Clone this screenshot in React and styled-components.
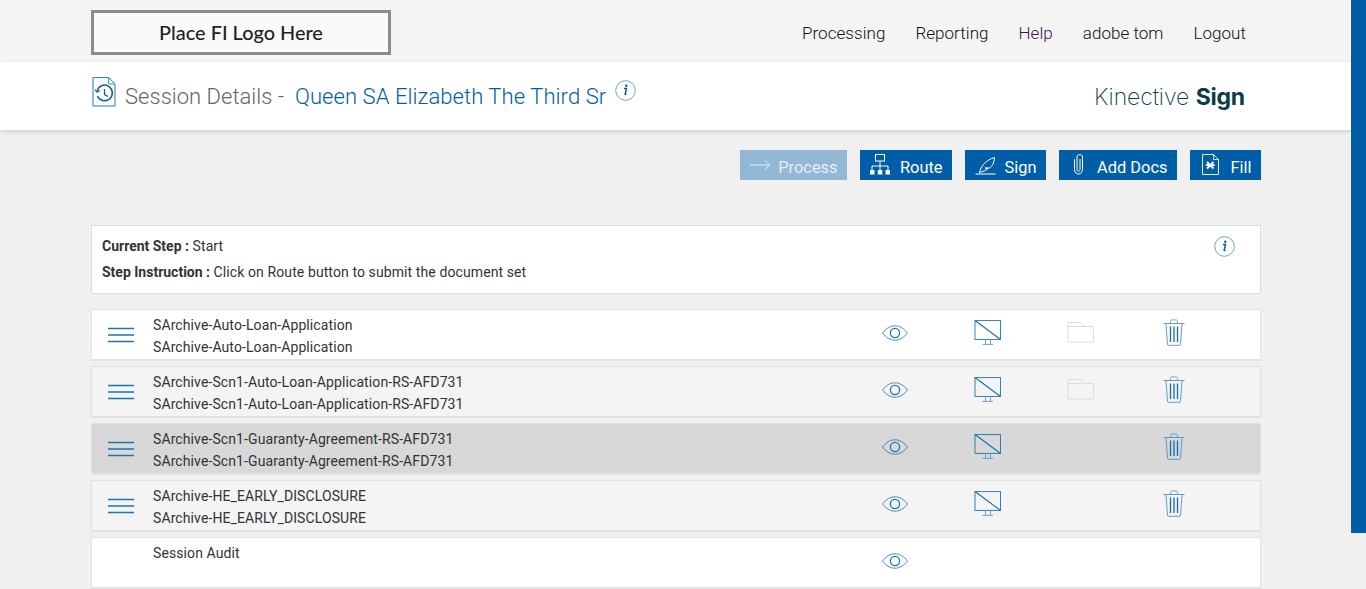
import React from "react";
import styled, { createGlobalStyle } from "styled-components";

const Global = createGlobalStyle`
  html, body { margin: 0; padding: 0; height: 589px; overflow: hidden; background: #f0f0f0; }
  body { font-family: Roboto, "Liberation Sans", sans-serif; color: #333; }
`;
const Page = styled.div`position: relative; width: 1366px; height: 589px; overflow: hidden; background: #f0f0f0;`;
const Thumb = styled.div`position: absolute; top: 0; right: 0; width: 15px; height: 533px; background: #005ea8;`;
const Main = styled.div`width: 1351px;`;
const TopBar = styled.header`
  height: 62px; box-sizing: border-box; background: #f4f4f4;
  padding: 10px 105px 0 91px; display: flex; justify-content: space-between; align-items: flex-start;
`;
const LogoBox = styled.div`
  width: 300px; height: 45px; box-sizing: border-box; border: 3px solid #8c8c8c; background: #fafafa;
  display: flex; align-items: center; justify-content: center;
  font: 500 19.9px/1 Lato, sans-serif; color: #222;
`;
const Nav = styled.nav`display: flex; gap: 30px; padding-top: 13px;`;
const NavLink = styled.a`font-size: 17px; line-height: 20px; font-weight: 300; letter-spacing: .04px; color: ${p => p.$c || "#111"};`;
const TitleBar = styled.div`
  height: 68px; box-sizing: border-box; background: #fff; box-shadow: 0 2px 5px rgba(0,0,0,.13);
  padding: 0 106px 0 91px; display: flex; justify-content: space-between; position: relative;
`;
const TitleLeft = styled.div`display: flex; align-items: flex-start; padding-top: 15px;`;
const DocIcon = styled.span`display: flex; margin-left: 1px;`;
const TitleText = styled.h1`
  margin: 6px 0 0 9px; font-size: 22px; line-height: 27px; font-weight: 300; letter-spacing: .02px; color: #666; white-space: pre;
`;
const Name = styled.span`color: #005ea8; letter-spacing: .08px;`;
const TitleInfo = styled.span`display: flex; margin: 3px 0 0 9px;`;
const Brand = styled.div`
  margin-top: 20px; font: 200 23px/30px Inter, sans-serif; letter-spacing: -.07px; color: #0b3c49;
  b { font-weight: 700; letter-spacing: -.2px; }
`;
const Content = styled.div`padding: 20px 90px 0 91px;`;
const Actions = styled.div`display: flex; justify-content: flex-end; gap: 13px; margin-bottom: 45px;`;
const Action = styled.button`
  width: ${p => p.$w}px; height: 30px; box-sizing: border-box; border: 0; padding: 4px 9.5px 0 ${p => p.$pad ?? 10}px;
  background: ${p => p.$off ? "#93b8d6" : "#005ea8"}; color: ${p => p.$off ? "#e6eef5" : "#fff"};
  display: flex; align-items: flex-start; justify-content: space-between;
  font: 400 16.4px/18px Roboto, sans-serif;
  span { padding-top: 5px; }
`;
const StepBox = styled.section`
  position: relative; height: 69px; box-sizing: border-box; background: #fff; border: 1px solid #ddd;
  padding: 10px 10px 0; margin-bottom: 15px; font-size: 14px; line-height: 20px; letter-spacing: .1px; color: #333;
  p { margin: 0 0 6px; }
  b { font-weight: 700; letter-spacing: 0; }
`;
const StepInfo = styled.span`position: absolute; top: 10px; right: 25px; display: flex;`;
const Rows = styled.div`display: flex; flex-direction: column; gap: 5px;`;
const Row = styled.div`
  height: 52px; box-sizing: border-box; background: ${p => p.$bg};
  border: 1px solid #e2e2e2; border-bottom-width: 2px;
  display: grid; grid-template-columns: 61px 695px repeat(4, 93px) 1fr;
  font-size: 14px; line-height: 22px; letter-spacing: .1px; color: #333;
`;
const Handle = styled.div`display: flex; align-items: flex-start; padding: 17px 0 0 16px;`;
const Names = styled.div`padding-top: 4px; white-space: nowrap;`;
const Cell = styled.div`display: flex; justify-content: center; padding-top: ${p => p.$t ?? 9}px;`;

const blue = "#1b74b4";
const MenuIcon = () => (
  <svg width="26" height="16" viewBox="0 0 26 16" fill="none" stroke={blue} strokeWidth="1.5"><path d="M0 1.500h26M0 8h26M0 14.500h26"/></svg>
);
const Eye = () => (
  <svg width="26" height="16" viewBox="0 0 26 16" fill="none" stroke={blue}>
    <path d="M.5 8C4 3.400 8.300.8 13 .8S22 3.400 25.500 8C22 12.600 17.700 15.200 13 15.200S4 12.600.5 8Z" strokeWidth=".8"/>
    <circle cx="13" cy="8" r="4.600" strokeWidth="1.300"/>
  </svg>
);
const Monitor = () => (
  <svg width="27" height="26" viewBox="-0.5 0 27 26" fill="none" stroke={blue}>
    <rect x=".5" y=".6" width="25.500" height="18.800" strokeWidth=".9"/>
    <path d="M.5.600 26 19.400" strokeWidth="1.200"/>
    <path d="M11 19.500v4.500M16 19.500v4.500M8 24.400h10.500" strokeWidth=".9" stroke="#5b9ac8"/>
  </svg>
);
const Folder = () => (
  <svg width="27" height="22" viewBox="-0.5 1 27 22" fill="none" stroke="#e2dcd8" strokeWidth="1">
    <path d="M.5 21V1.500h13l3 4H26V21Z"/><path d="M.5 5.500h16"/>
  </svg>
);
const Trash = () => (
  <svg width="22" height="27" viewBox="0 0 22 27" fill="none" stroke="#4e93c6">
    <path d="M.5 4.500h21" strokeWidth=".9"/>
    <path d="M7.500 4.300V2.400c0-1 .8-1.500 1.500-1.500h4c.8 0 1.500.6 1.500 1.500v1.900" strokeWidth=".8"/>
    <path d="M3 5l1.500 20.500c0 .5.400.8 1 .8h11c.6 0 1-.3 1-.8L19 5" strokeWidth=".9"/>
    <path d="M7.500 7.500v15.500M11 7.500v15.500M14.500 7.500v15.500" stroke="#1b6aa8" strokeWidth="1.300"/>
  </svg>
);
const Info = ({ size = 21 }) => (
  <svg width={size} height={size} viewBox="0 0 21 21" fill="none">
    <circle cx="10.500" cy="10.500" r="9.800" stroke="#5b9ac8" strokeWidth=".9"/>
    <path d="M9 8.400h2.500l-1.300 5.700c-.1.500.3.600 1.200-.1" stroke="#005ea8" strokeWidth="1.500"/>
    <circle cx="11.300" cy="5.700" r="1.200" fill="#005ea8"/>
  </svg>
);
const HistoryDoc = () => (
  <svg width="24" height="30" viewBox="0 0 24 30" fill="none" stroke="#1b7cc0">
    <path d="M1 .6h15.500L23 7v22H1Z" strokeWidth="1"/>
    <path d="M16.500.6V7h6.500" strokeWidth=".8"/>
    <path d="M5 14a7.800 7.800 0 1 1 .4 5" strokeWidth="1.500" stroke="#14608f"/>
    <path d="M2.800 12.500l2.200 2.800 3-1.800" strokeWidth="1.200" stroke="#14608f"/>
    <path d="M12.500 12v5.500l3.500 2" strokeWidth="1.300" stroke="#14608f"/>
  </svg>
);
const wh = "#fff";
const Arrow = () => (
  <svg width="20" height="21" viewBox="0 0 20 21" fill="none" stroke="#e6eef5"><path d="M0 11h19.500M15 6.500l4.500 4.500-4.500 4.500"/></svg>
);
const RouteIcon = () => (
  <svg width="20" height="21" viewBox="0 0 20 21" fill={wh} stroke={wh}>
    <rect x="5.500" y=".5" width="9" height="6.500" fill="none"/><path d="M10 7v5M2 16v-4h16v4M10 12v4" fill="none"/>
    <rect x=".5" y="16.500" width="3.500" height="3.500"/><rect x="8.300" y="16.500" width="3.500" height="3.500"/><rect x="16" y="16.500" width="3.500" height="3.500"/>
  </svg>
);
const Quill = () => (
  <svg width="21" height="21" viewBox="0 -2.500 21 21" fill="none" stroke={wh}>
    <path d="M.5 17.500h20" strokeWidth="1"/>
    <path d="M4.500 16C5.500 10 11 3.500 19.500 1c-.5 6-2.500 9-5 10.500H10l3 .5c-2 2-5 3-8.500 4Z" strokeWidth="1"/>
  </svg>
);
const Clip = () => (
  <svg width="9" height="21" viewBox="0 0 9 21" fill="none" stroke={wh} strokeWidth="1"><path d="M6 5v10.500c0 2.500-3 2.500-3 0V3c0-3.200 5.500-3.200 5.500 0v12.500c0 6-8 6-8 0V5"/></svg>
);
const FillIcon = () => (
  <svg width="17" height="21" viewBox="0 0 17 21" fill="none" stroke={wh}>
    <path d="M.5.500h11l5 5v15H.5Z" strokeWidth=".9"/><path d="M11.500.500v5h5" strokeWidth=".8"/>
    <path d="M5 8l6.500 6.500M11.500 8L5 14.500M3.800 11.200h9" strokeWidth="1.800"/>
  </svg>
);

const docs = [
  ["SArchive-Auto-Loan-Application", "#fff", true],
  ["SArchive-Scn1-Auto-Loan-Application-RS-AFD731", "#f4f4f4", true],
  ["SArchive-Scn1-Guaranty-Agreement-RS-AFD731", "#d8d8d8", false],
  ["SArchive-HE_EARLY_DISCLOSURE", "#f4f4f4", false],
];

export default function App() {
  return (
    <Page>
      <Global />
      <Main>
        <TopBar>
          <LogoBox>Place FI Logo Here</LogoBox>
          <Nav>
            <NavLink>Processing</NavLink>
            <NavLink>Reporting</NavLink>
            <NavLink $c="#3c1053">Help</NavLink>
            <NavLink>adobe tom</NavLink>
            <NavLink>Logout</NavLink>
          </Nav>
        </TopBar>
        <TitleBar>
          <TitleLeft>
            <DocIcon><HistoryDoc /></DocIcon>
            <TitleText>Session Details -  <Name>Queen SA Elizabeth The Third Sr</Name></TitleText>
            <TitleInfo><Info /></TitleInfo>
          </TitleLeft>
          <Brand>Kinective <b>Sign</b></Brand>
        </TitleBar>
        <Content>
          <Actions>
            <Action $w={107} $off><Arrow /><span>Process</span></Action>
            <Action $w={92}><RouteIcon /><span>Route</span></Action>
            <Action $w={81}><Quill /><span>Sign</span></Action>
            <Action $w={118} $pad={15}><Clip /><span>Add Docs</span></Action>
            <Action $w={71} $pad={12}><FillIcon /><span>Fill</span></Action>
          </Actions>
          <StepBox>
            <p><b>Current Step :</b> Start</p>
            <p><b>Step Instruction :</b> Click on Route button to submit the document set</p>
            <StepInfo><Info /></StepInfo>
          </StepBox>
          <Rows>
            {docs.map(([name, bg, folder]) => (
              <Row key={name} $bg={bg}>
                <Handle><MenuIcon /></Handle>
                <Names>{name}<br />{name}</Names>
                <Cell $t={15}><Eye /></Cell>
                <Cell $t={10}><Monitor /></Cell>
                <Cell $t={12}>{folder && <Folder />}</Cell>
                <Cell><Trash /></Cell>
              </Row>
            ))}
            <Row $bg="#fff">
              <span />
              <Names>Session Audit</Names>
              <Cell $t={15}><Eye /></Cell>
            </Row>
          </Rows>
        </Content>
      </Main>
      <Thumb />
    </Page>
  );
}
